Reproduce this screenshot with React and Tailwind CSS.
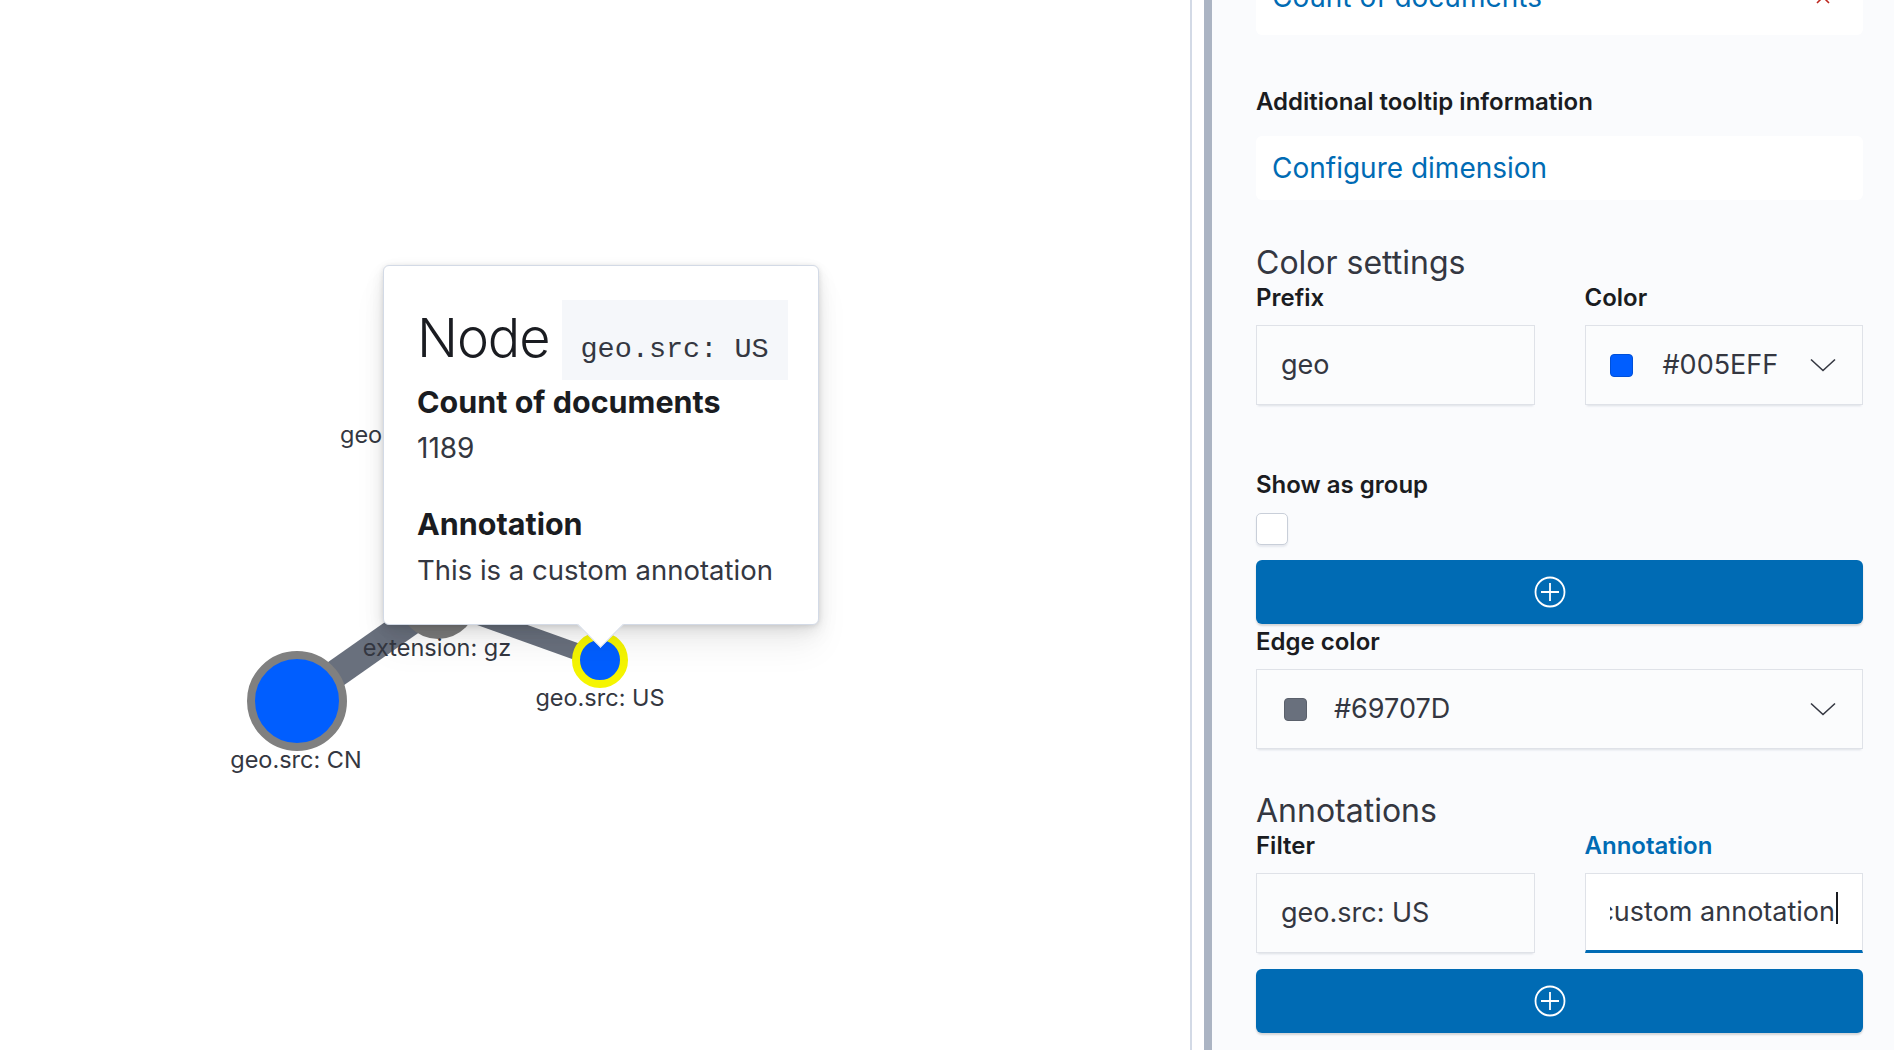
import React from "react";

function PlusCircle() {
  return (
    <svg width="32" height="32" viewBox="0 0 32 32" fill="none" stroke="white" strokeWidth="1.8">
      <circle cx="16" cy="16" r="14.5" />
      <path d="M16 7v18M7 16h18" />
    </svg>
  );
}

function Chevron() {
  return (
    <svg width="26" height="14" viewBox="0 0 26 14" fill="none" stroke="#343741" strokeWidth="1.6">
      <path d="M1 1.5l12 11 12-11" />
    </svg>
  );
}

function Label({ children, className = "" }) {
  return <div className={"text-[24px] leading-6 font-semibold text-[#1a1c21] " + className}>{children}</div>;
}

function Field({ children, className = "" }) {
  return (
    <div
      className={
        "flex h-[80px] items-center border border-[#dfe2e8] bg-[#fbfcfd] px-6 text-[27px] text-[#343741] shadow-[0_3px_2px_-2px_rgba(152,162,179,0.3)] " +
        className
      }
    >
      {children}
    </div>
  );
}

function AddButton({ className = "" }) {
  return (
    <button className={"flex h-[64px] w-full items-center justify-center rounded-md bg-[#006bb4] shadow-[0_2px_2px_rgba(0,0,0,0.15)] " + className}>
      <span className="mr-[20px]">
        <PlusCircle />
      </span>
    </button>
  );
}

function Graph() {
  return (
    <svg className="absolute inset-0" width="1190" height="1050">
      <line x1="438" y1="602" x2="400" y2="440" stroke="#69707d" strokeWidth="14" />
      <line x1="297" y1="701" x2="438" y2="602" stroke="#69707d" strokeWidth="28" />
      <line x1="438" y1="602" x2="600" y2="660" stroke="#69707d" strokeWidth="17" />
      <circle cx="438" cy="600" r="39" fill="#7b7b7b" />
      <circle cx="297" cy="701" r="46" fill="#005eff" stroke="#808080" strokeWidth="8" />
      <circle cx="600" cy="660" r="24" fill="#005eff" stroke="#f5f500" strokeWidth="8" />
      <g fill="#343741" fontSize="23.5" fontFamily="Inter, sans-serif" textAnchor="middle">
        <text x="437" y="656">extension: gz</text>
        <text x="600" y="706">geo.src: US</text>
        <text x="296" y="768">geo.src: CN</text>
        <text x="340" y="443" textAnchor="start">geo.dest: IN</text>
      </g>
    </svg>
  );
}

function Tooltip() {
  return (
    <div className="absolute left-[383px] top-[265px] h-[360px] w-[436px] rounded-md border border-[#d3dae6] bg-white pl-[33px] pt-[34px] shadow-[0_1px_5px_rgba(0,0,0,0.1),0_4px_13px_rgba(0,0,0,0.07),0_9px_23px_rgba(0,0,0,0.06),0_23px_35px_rgba(0,0,0,0.05)]">
      <div className="absolute bottom-[-17px] left-[200px] h-[33px] w-[33px] rotate-45 border-b border-r border-[#d3dae6] bg-white" />
      <div className="relative flex items-start">
        <span className="mt-[11px] text-[54px] font-light leading-none tracking-[-0.02em] text-[#1a1c21]">Node</span>
        <span className="ml-[12px] h-[80px] bg-[#f5f7fa] px-[19px] pt-[36px] font-['Liberation_Mono',monospace] text-[28.5px] leading-none text-[#343741]">
          geo.src: US
        </span>
      </div>
      <div className="relative mt-[5px] text-[30.5px] font-bold leading-[34px] text-[#1a1c21]">Count of documents</div>
      <div className="relative mt-[13px] text-[28px] leading-8 text-[#343741]">1189</div>
      <div className="relative mt-[43px] text-[30.5px] font-bold leading-[34px] text-[#1a1c21]">Annotation</div>
      <div className="relative mt-[13px] text-[27.5px] leading-8 text-[#343741]">This is a custom annotation</div>
    </div>
  );
}

export default function App() {
  return (
    <div className="flex h-[1050px] w-[1894px] overflow-hidden bg-white font-[Inter,sans-serif]">
      <div className="relative w-[1190px] shrink-0">
        <Graph />
        <Tooltip />
      </div>
      <div className="w-[2px] shrink-0 bg-[#d3dae6]" />
      <div className="w-[12px] shrink-0 bg-white" />
      <div className="w-[8px] shrink-0 bg-[#abb4c3]" />
      <div className="flex-1 bg-[#fafbfd] pl-[44px] pr-[31px]">
        <div className="mt-[-30px] flex h-[65px] items-start justify-between rounded-md bg-white pl-4 pr-[32px]">
          <span className="mt-[11px] text-[28px] leading-8 text-[#006bb4]">Count of documents</span>
          <svg className="mt-[19px]" width="16" height="16" viewBox="0 0 16 16" stroke="#bd271e" strokeWidth="1.6">
            <path d="M2 2l12 12M14 2L2 14" />
          </svg>
        </div>

        <Label className="mt-[55px]">Additional tooltip information</Label>
        <div className="mt-[22px] flex h-[64px] items-center rounded-md bg-white px-4 text-[28px] text-[#006bb4]">
          Configure dimension
        </div>

        <div className="mt-[45px] text-[32px] leading-9 text-[#343741]">Color settings</div>
        <div className="grid grid-cols-2 gap-x-[50px]">
          <div>
            <Label className="mt-[5px]">Prefix</Label>
            <Field className="mt-[15px]">geo</Field>
          </div>
          <div>
            <Label className="mt-[5px]">Color</Label>
            <Field className="mt-[15px] pr-[26px]">
              <span className="h-[23px] w-[23px] rounded-[4px] border border-[#0050d8] bg-[#005eff]" />
              <span className="ml-[30px] flex-1">#005EFF</span>
              <Chevron />
            </Field>
          </div>
        </div>

        <Label className="mt-[68px]">Show as group</Label>
        <div className="mt-[16px] h-[32px] w-[32px] rounded-[5px] border border-[#c9cfd9] bg-white shadow-[0_2px_2px_rgba(152,162,179,0.2)]" />
        <AddButton className="mt-[15px]" />

        <Label className="mt-[6px]">Edge color</Label>
        <Field className="mt-[15px] pl-[27px] pr-[26px]">
          <span className="h-[23px] w-[23px] rounded-[4px] border border-[#5a606b] bg-[#69707d]" />
          <span className="ml-[27px] flex-1">#69707D</span>
          <Chevron />
        </Field>

        <div className="mt-[44px] text-[32px] leading-9 text-[#343741]">Annotations</div>
        <div className="grid grid-cols-2 gap-x-[50px]">
          <div>
            <Label className="mt-[5px]">Filter</Label>
            <Field className="mt-[15px]">geo.src: US</Field>
          </div>
          <div>
            <Label className="mt-[5px] text-[#006bb4]">Annotation</Label>
            <div className="mt-[15px] flex h-[80px] items-center border border-[#dfe2e8] border-b-[3px] border-b-[#006bb4] bg-white px-6 text-[27px] text-[#343741]">
              <div className="flex flex-1 justify-end overflow-hidden whitespace-nowrap">
                <span>This is a custom annotation</span>
                <span className="ml-px h-[32px] w-[2px] shrink-0 bg-[#1a1c21]" />
              </div>
            </div>
          </div>
        </div>
        <AddButton className="mt-[16px]" />
      </div>
    </div>
  );
}
